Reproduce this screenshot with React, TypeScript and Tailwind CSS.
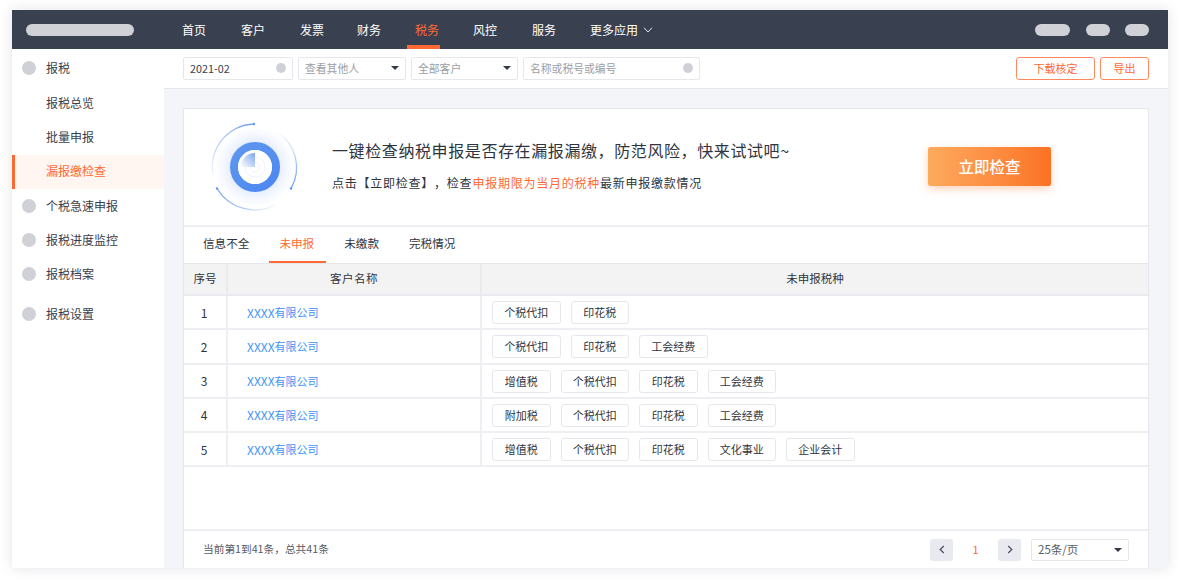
const NAV: [string, string][] = [
  ["首页", "w-[59px]"],
  ["客户", "w-[59px]"],
  ["发票", "w-[57px]"],
  ["财务", "w-[58px]"],
  ["税务", "w-[58px]"],
  ["风控", "w-[59px]"],
  ["服务", "w-[58px]"],
];
const ROWS: string[][] = [
  ["个税代扣", "印花税"],
  ["个税代扣", "印花税", "工会经费"],
  ["增值税", "个税代扣", "印花税", "工会经费"],
  ["附加税", "个税代扣", "印花税", "工会经费"],
  ["增值税", "个税代扣", "印花税", "文化事业", "企业会计"],
];
const ROW_H = ["h-[34px]", "h-[35px]", "h-[34px]", "h-[34px]", "h-[34px]"];
const CELL_PT = ["pt-[1px]", "", "", "", "pt-[1px]"];

function Caret() {
  return <span className="w-0 h-0 border-x-[4px] border-x-transparent border-t-[4px] border-t-[#333a46]" />;
}

function Field({ w, text, muted, dot, caret }: { w: string; text: string; muted?: boolean; dot?: boolean; caret?: boolean }) {
  return (
    <div className={`${w} h-[23px] flex items-center justify-between pl-[6px] pr-[6px] bg-white border border-[#e6e7eb] rounded-[2px] text-[10.8px] ${muted ? "text-[#9a9ea6]" : "text-[#3a404b]"}`}>
      <span>{text}</span>
      {dot && <span className="w-[10px] h-[10px] rounded-full bg-[#d0d1d6]" />}
      {caret && <Caret />}
    </div>
  );
}

function Side({ text, icon, active, cls }: { text: string; icon?: boolean; active?: boolean; cls?: string }) {
  return (
    <div className={`h-[34px] flex items-center text-[12px] ${cls ?? ""} ${active ? "bg-[#fff6f2] text-[#ff6a33] border-l-[3px] border-[#ff6a33] pl-[31px] pb-[2px]" : "text-[#3a404b] pl-[10px]"}`}>
      {!active && <span className={`w-[14px] h-[14px] rounded-full mr-[10px] ${icon ? "bg-[#d0d1d6]" : ""}`} />}
      {text}
    </div>
  );
}

function Radar() {
  return (
    <svg width="100" height="100" viewBox="-50 -50 100 100" fill="none" className="shrink-0">
      <defs>
        <radialGradient id="halo" cx="0" cy="0" r="40" gradientUnits="userSpaceOnUse">
          <stop offset="0.6" stopColor="#dde8fd" stopOpacity="0.8" />
          <stop offset="0.95" stopColor="#eef3fe" stopOpacity="0.2" />
          <stop offset="1" stopColor="#ffffff" stopOpacity="0" />
        </radialGradient>
        <linearGradient id="ringG" x1="-25" y1="-25" x2="25" y2="25" gradientUnits="userSpaceOnUse">
          <stop offset="0" stopColor="#6098ee" />
          <stop offset="1" stopColor="#4a86f2" />
        </linearGradient>
        <linearGradient id="pieG" x1="-14" y1="0" x2="0" y2="-14" gradientUnits="userSpaceOnUse">
          <stop offset="0" stopColor="#ffffff" />
          <stop offset="1" stopColor="#7ea6ea" />
        </linearGradient>
        <linearGradient id="a1" x1="0" y1="-43" x2="-40" y2="15" gradientUnits="userSpaceOnUse">
          <stop offset="0" stopColor="#6f9ff2" />
          <stop offset="1" stopColor="#6f9ff2" stopOpacity="0" />
        </linearGradient>
        <linearGradient id="a2" x1="-38" y1="21" x2="20" y2="38" gradientUnits="userSpaceOnUse">
          <stop offset="0" stopColor="#6f9ff2" />
          <stop offset="1" stopColor="#6f9ff2" stopOpacity="0.1" />
        </linearGradient>
        <linearGradient id="a3" x1="36" y1="21" x2="22" y2="-35" gradientUnits="userSpaceOnUse">
          <stop offset="0" stopColor="#6f9ff2" />
          <stop offset="1" stopColor="#6f9ff2" stopOpacity="0" />
        </linearGradient>
      </defs>
      <circle r="39" fill="url(#halo)" />
      <circle r="21" stroke="url(#ringG)" strokeWidth="8" />
      <circle r="17" fill="#ffffff" />
      <circle r="10" stroke="#f0f4fc" strokeWidth="1" />
      <circle r="5" stroke="#f0f4fc" strokeWidth="1" />
      <path d="M0 0 L0 -14 A14 14 0 0 0 -14 0 Z" fill="url(#pieG)" />
      <path d="M-1 -43 A43 43 0 0 0 -40 15" stroke="url(#a1)" strokeWidth="1.3" />
      <circle cx="-1" cy="-43" r="1.2" fill="#5f96ee" />
      <path d="M-38 21.5 A44 44 0 0 0 20 38" stroke="url(#a2)" strokeWidth="1.3" />
      <circle cx="-38" cy="21.5" r="1.2" fill="#5f96ee" />
      <path d="M36 21.5 A42 42 0 0 0 22 -35" stroke="url(#a3)" strokeWidth="1.3" />
      <circle cx="36" cy="21.5" r="1.2" fill="#5f96ee" />
    </svg>
  );
}

export default function App() {
  return (
    <div
      className="w-[1180px] h-[582px] bg-white overflow-hidden pt-[10px] pl-[12px] pr-[12px] text-[#2f3540]"
      style={{ fontFamily: '"Noto Sans CJK SC", "Noto Sans", sans-serif' }}
    >
      <div className="w-[1156px] h-[558px] flex flex-col bg-white shadow-[0_0_12px_rgba(50,60,90,0.14)]">
        <header className="h-[39px] shrink-0 bg-[#394150] flex items-center text-white text-[12px]">
          <div className="ml-[14px] w-[108px] h-[12px] rounded-full bg-[#d0d1d6]" />
          <nav className="ml-[43px] flex h-full items-stretch">
            {NAV.map(([n, w]) => (
              <div key={n} className={`relative ${w} pl-[5px] flex items-center ${n === "税务" ? "text-[#ff6a33]" : ""}`}>
                {n}
                {n === "税务" && <span className="absolute left-[-3px] bottom-0 w-[33px] h-[4px] bg-[#ff6a33]" />}
              </div>
            ))}
            <div className="pl-[5px] flex items-center gap-[5px]">
              更多应用
              <svg width="10" height="6" viewBox="0 0 10 6" fill="none" stroke="#e8e9ec" strokeWidth="1">
                <path d="M1 .8 5 5 9 .8" />
              </svg>
            </div>
          </nav>
          <div className="ml-auto mr-[19px] flex items-center">
            <span className="w-[35px] h-[12px] rounded-full bg-[#d0d1d6]" />
            <span className="ml-[16px] w-[24px] h-[12px] rounded-full bg-[#d0d1d6]" />
            <span className="ml-[15px] w-[24px] h-[12px] rounded-full bg-[#d0d1d6]" />
          </div>
        </header>

        <div className="flex-1 flex min-h-0">
          <aside className="w-[152px] shrink-0 bg-white pt-[2px]">
            <Side text="报税" icon cls="mb-[1px]" />
            <Side text="报税总览" />
            <Side text="批量申报" />
            <Side text="漏报缴检查" active cls="mt-[1px]" />
            <Side text="个税急速申报" icon />
            <Side text="报税进度监控" icon />
            <Side text="报税档案" icon />
            <Side text="报税设置" icon cls="mt-[6px]" />
          </aside>

          <main className="flex-1 min-w-0 flex flex-col bg-[#f4f5f9]">
            <div className="h-[40px] shrink-0 bg-white border-b border-[#e6e7eb] flex items-center pl-[19px] pr-[19px] pb-[1px]">
              <Field w="w-[110px]" text="2021-02" dot />
              <div className="w-[5px]" />
              <Field w="w-[108px]" text="查看其他人" muted caret />
              <div className="w-[5px]" />
              <Field w="w-[107px]" text="全部客户" muted caret />
              <div className="w-[5px]" />
              <Field w="w-[177px]" text="名称或税号或编号" muted dot />
              <button className="ml-auto w-[79px] h-[23px] border border-[#ff8a60] rounded-[3px] text-[11px] text-[#ff6a33] bg-white">下载核定</button>
              <button className="ml-[5px] w-[49px] h-[23px] border border-[#ff8a60] rounded-[3px] text-[11px] text-[#ff6a33] bg-white">导出</button>
            </div>

            <div className="flex-1 min-h-0 mt-[19px] ml-[19px] mr-[19px] bg-white border border-b-0 border-[#e6e7eb] rounded-t-[2px] flex flex-col">
              <section className="h-[118px] shrink-0 flex items-center border-b-2 border-[#eeeff2] pb-[1px]">
                <div className="ml-[21px]"><Radar /></div>
                <div className="ml-[27px] w-[596px] pb-[3px]">
                  <div className="text-[16px] leading-[24px] tracking-[0.6px] text-[#2f3540]">一键检查纳税申报是否存在漏报漏缴，防范风险，快来试试吧~</div>
                  <div className="mt-[12px] text-[12px] leading-[18px] tracking-[0.76px] [text-spacing-trim:space-all] text-[#2f3540]">
                    点击【立即检查】，检查<span className="text-[#ff6a33]">申报期限为当月的税种</span>最新申报缴款情况
                  </div>
                </div>
                <button className="w-[123px] h-[39px] rounded-[2px] text-white text-[15.5px] font-medium bg-gradient-to-r from-[#fdaa5e] to-[#fb7222] shadow-[0_3px_8px_rgba(251,114,34,0.3)]">
                  立即检查
                </button>
              </section>

              <div className="h-[37px] shrink-0 flex text-[11.6px] pl-[8px] border-b border-[#e6e7eb]">
                {["信息不全", "未申报", "未缴款", "完税情况"].map((t) => (
                  <div key={t} className={`px-[11px] pb-[3px] flex items-center relative mr-[8px] ${t === "未申报" ? "text-[#ff6a33]" : ""}`}>
                    {t}
                    {t === "未申报" && <span className="absolute left-[1px] right-[-1px] bottom-0 h-[2px] bg-[#ff6a33]" />}
                  </div>
                ))}
              </div>

              <div className="h-[32px] shrink-0 flex items-center bg-[#f3f3f4] border-b-2 border-[#e9eaee] text-[11.5px]">
                <div className="w-[44px] h-full flex items-center justify-center border-r-2 border-[#e9eaee]">序号</div>
                <div className="w-[254px] h-full flex items-center justify-center border-r-2 border-[#e9eaee] tracking-[0.5px]">客户名称</div>
                <div className="flex-1 h-full flex items-center justify-center">未申报税种</div>
              </div>

              {ROWS.map((tags, i) => (
                <div key={i} className={`${ROW_H[i]} shrink-0 flex items-stretch border-b-2 border-[#eeeff2]`}>
                  <div className={`w-[44px] pr-[2px] ${CELL_PT[i]} flex items-center justify-center border-r-2 border-[#eeeff2] text-[12px]`}>{i + 1}</div>
                  <div className={`w-[254px] ${CELL_PT[i]} flex items-center pl-[19px] border-r-2 border-[#eeeff2] text-[11px] text-[#3f94f5]`}>
                    <span className="text-[12px]">XXXX</span>有限公司
                  </div>
                  <div className={`flex-1 ${CELL_PT[i]} flex items-center pl-[10px] gap-[10px]`}>
                    {tags.map((t, j) => (
                      <span key={j} className={`${t.length === 3 ? "w-[58.5px]" : "w-[68.5px]"} h-[23px] flex items-center justify-center border border-[#e6e7eb] rounded-[3px] text-[11px] text-[#2f3540]`}>
                        {t}
                      </span>
                    ))}
                  </div>
                </div>
              ))}

              <div className="flex-1" />

              <footer className="h-[39px] shrink-0 flex items-center border-t-2 border-[#eeeff2] pl-[19px] pr-[19px] text-[10.7px] text-[#565c66]">
                <span>当前第1到41条，总共41条</span>
                <button className="ml-auto w-[23px] h-[22px] rounded-[3px] bg-[#e9eaef] flex items-center justify-center">
                  <svg width="6" height="9" viewBox="0 0 6 9" fill="none" stroke="#4a505b" strokeWidth="1.2"><path d="M4.8 1 1.2 4.5 4.8 8" /></svg>
                </button>
                <span className="w-[45px] text-center text-[11px] text-[#ff6a33]">1</span>
                <button className="w-[23px] h-[22px] rounded-[3px] bg-[#e9eaef] flex items-center justify-center">
                  <svg width="6" height="9" viewBox="0 0 6 9" fill="none" stroke="#4a505b" strokeWidth="1.2"><path d="M1.2 1 4.8 4.5 1.2 8" /></svg>
                </button>
                <div className="ml-[10px] w-[98px] h-[22px] flex items-center justify-between pl-[6px] pr-[6px] border border-[#e6e7eb] rounded-[2px] text-[11.5px]">
                  <span>25条/页</span>
                  <Caret />
                </div>
              </footer>
            </div>
          </main>
        </div>
      </div>
    </div>
  );
}
